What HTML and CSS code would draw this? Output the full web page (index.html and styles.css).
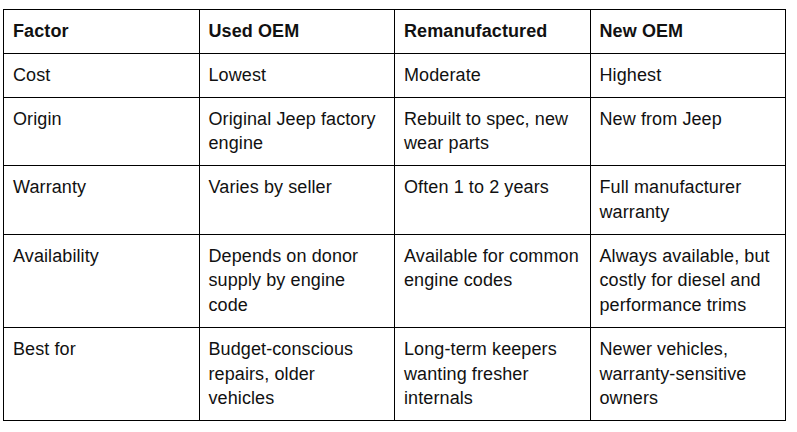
FILE: index.html
```html
<!DOCTYPE html>
<html lang="en">
<head>
<meta charset="utf-8">
<title>Engine options comparison</title>
<link rel="stylesheet" href="styles.css">
</head>
<body>
<div class="wrap">
<table class="cmp">
<colgroup><col><col><col><col></colgroup>
<thead>
<tr><th>Factor</th><th>Used OEM</th><th>Remanufactured</th><th>New OEM</th></tr>
</thead>
<tbody>
<tr><td>Cost</td><td>Lowest</td><td>Moderate</td><td>Highest</td></tr>
<tr><td>Origin</td><td>Original Jeep factory engine</td><td>Rebuilt to spec, new wear parts</td><td>New from Jeep</td></tr>
<tr><td>Warranty</td><td>Varies by seller</td><td>Often 1 to 2 years</td><td>Full manufacturer warranty</td></tr>
<tr><td>Availability</td><td>Depends on donor supply by engine code</td><td>Available for common engine codes</td><td>Always available, but costly for diesel and performance trims</td></tr>
<tr><td>Best for</td><td>Budget-conscious repairs, older vehicles</td><td>Long-term keepers wanting fresher internals</td><td>Newer vehicles, warranty-sensitive owners</td></tr>
</tbody>
</table>
</div>
</body>
</html>
```

FILE: styles.css
```css
html, body {
  margin: 0;
  padding: 0;
  background: #fff;
}
.wrap {
  padding: 9px 3px;
}
.cmp {
  width: 783px;
  table-layout: fixed;
  border-collapse: collapse;
  font-family: "Liberation Sans", Arial, sans-serif;
  font-size: 18px;
  letter-spacing: 0.1px;
  line-height: 24.75px;
  color: #111;
}
.cmp th,
.cmp td {
  border: 1px solid #000;
  padding: 9px 9px;
  text-align: left;
  vertical-align: top;
}
.cmp th {
  font-weight: bold;
}
```
